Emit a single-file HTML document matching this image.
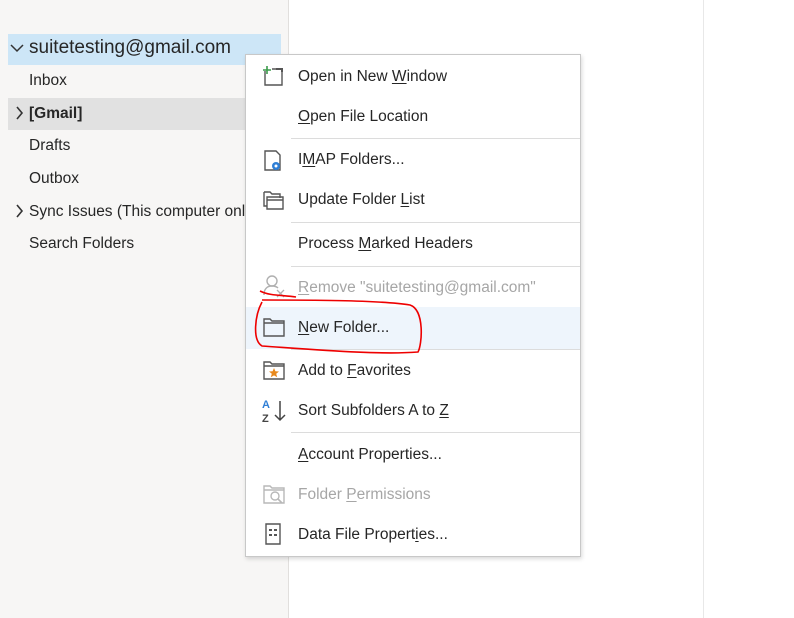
<!DOCTYPE html>
<html><head><style>
body{margin:0;width:794px;height:618px;position:relative;background:#fff;font-family:"Liberation Sans",sans-serif;overflow:hidden;color:#262626}
.left{position:absolute;left:0;top:0;width:288px;height:618px;background:#f7f6f5;border-right:1px solid #e1dfdd}
.vline{position:absolute;left:703px;top:0;width:1px;height:618px;background:#e8e8e8}
.t{position:absolute;font-size:15.5px;white-space:nowrap}
.menu{position:absolute;left:245px;top:54px;width:334px;height:501px;background:#fff;border:1px solid #c8c8c8;box-shadow:1px 2px 4px rgba(0,0,0,.15)}
.it{position:absolute;left:52px;font-size:15.5px;white-space:nowrap;color:#262626}
.dis{color:#a6a6a6}
.sep{position:absolute;left:45px;right:0;height:1px;background:#dcdcdc}
u{text-decoration:underline;text-underline-offset:2px}
svg{position:absolute}
</style></head><body>
<div class="left">
<div style="position:absolute;left:8px;top:34px;width:273px;height:31px;background:#cde6f7"></div>
<div style="position:absolute;left:8px;top:98px;width:240px;height:32px;background:#e1e1e1"></div>
<svg style="left:10px;top:43px" width="14" height="10"><path d="M1 2 L7 8 L13 2" stroke="#333" stroke-width="1.5" fill="none"/></svg>
<div class="t" style="left:29px;top:37px;font-size:19px;color:#262626">suitetesting@gmail.com</div>
<div class="t" style="left:29px;top:72px">Inbox</div>
<svg style="left:16px;top:106px" width="8" height="14"><path d="M1 1 L6 7 L1 13" stroke="#333" stroke-width="1.6" fill="none"/></svg>
<div class="t" style="left:29px;top:105px;font-weight:bold">[Gmail]</div>
<div class="t" style="left:29px;top:137px">Drafts</div>
<div class="t" style="left:29px;top:170px">Outbox</div>
<svg style="left:16px;top:204px" width="8" height="14"><path d="M1 1 L6 7 L1 13" stroke="#333" stroke-width="1.6" fill="none"/></svg>
<div class="t" style="left:29px;top:203px">Sync Issues (This computer only)</div>
<div class="t" style="left:29px;top:235px">Search Folders</div>
</div>
<div class="vline"></div>
<div class="menu">
<div style="position:absolute;left:0;top:252px;width:334px;height:42px;background:#eef5fc"></div>
<svg style="left:16px;top:10px" width="22" height="22"><path d="M3 6 V20 H20 V4 H10" stroke="#555" stroke-width="1.4" fill="none"/><path d="M14 4 H20 V7" stroke="#555" stroke-width="2" fill="none"/><path d="M5 1 V9 M1 5 H9" stroke="#3a9b4a" stroke-width="1.6"/></svg>
<div class="it" style="top:13px">Open in New <u>W</u>indow</div>
<div class="it" style="top:53px"><u>O</u>pen File Location</div>
<div class="sep" style="top:83px"></div>
<svg style="left:16px;top:94px" width="22" height="24"><path d="M3 2 H14 L18 6 V21 H3 Z" stroke="#555" stroke-width="1.4" fill="none"/><circle cx="14" cy="17" r="4" fill="#2f7fd6"/><circle cx="14" cy="17" r="1.5" fill="#fff"/></svg>
<div class="it" style="top:96px">I<u>M</u>AP Folders...</div>
<svg style="left:16px;top:134px" width="24" height="22"><path d="M2 3 H8 L10 5 H18 V9" stroke="#555" stroke-width="1.4" fill="none"/><path d="M5 8 H21 V20 H5 Z M5 11 H21" stroke="#555" stroke-width="1.4" fill="none"/><path d="M2 3 V17 H5" stroke="#555" stroke-width="1.4" fill="none"/></svg>
<div class="it" style="top:136px">Update Folder <u>L</u>ist</div>
<div class="sep" style="top:167px"></div>
<div class="it" style="top:180px">Process <u>M</u>arked Headers</div>
<div class="sep" style="top:211px"></div>
<svg style="left:16px;top:219px" width="24" height="24"><circle cx="10" cy="7" r="5" stroke="#b0b0b0" stroke-width="1.4" fill="none"/><path d="M2 21 C2 14 6 12 10 12 C13 12 15 13 16 14" stroke="#b0b0b0" stroke-width="1.4" fill="none"/><path d="M15 16 L22 23 M22 16 L15 23" stroke="#b0b0b0" stroke-width="1.3"/></svg>
<div class="it dis" style="top:224px"><u>R</u>emove "suitetesting@gmail.com"</div>
<div class="sep" style="top:294px"></div>
<svg style="left:16px;top:261px" width="24" height="22"><path d="M2 3 H8 L10 5 H22 V20 H2 Z M2 7 H22" stroke="#555" stroke-width="1.4" fill="none"/></svg>
<div class="it" style="top:264px"><u>N</u>ew Folder...</div>
<svg style="left:16px;top:304px" width="24" height="22"><path d="M2 3 H8 L10 5 H22 V20 H2 Z M2 7 H22" stroke="#555" stroke-width="1.4" fill="none"/><path d="M12 9 L13.4 12.3 L17 12.5 L14.2 14.8 L15.2 18.3 L12 16.4 L8.8 18.3 L9.8 14.8 L7 12.5 L10.6 12.3 Z" fill="#e8891d"/></svg>
<div class="it" style="top:307px">Add to <u>F</u>avorites</div>
<svg style="left:16px;top:342px" width="26" height="28"><text x="0" y="11" font-size="11" font-family="Liberation Sans" font-weight="bold" fill="#2f7fd6">A</text><text x="0" y="25" font-size="11" font-family="Liberation Sans" font-weight="bold" fill="#444">Z</text><path d="M18 4 V23 M13 18 L18 23 L23 18" stroke="#444" stroke-width="1.5" fill="none"/></svg>
<div class="it" style="top:347px">Sort Subfolders A to <u>Z</u></div>
<div class="sep" style="top:377px"></div>
<div class="it" style="top:391px"><u>A</u>ccount Properties...</div>
<svg style="left:16px;top:428px" width="24" height="22"><path d="M2 3 H8 L10 5 H22 V20 H2 Z M2 7 H22" stroke="#b8b8b8" stroke-width="1.4" fill="none"/><circle cx="13" cy="13" r="4" stroke="#b8b8b8" stroke-width="1.4" fill="none"/><path d="M16 16 L20 20" stroke="#b8b8b8" stroke-width="1.6"/></svg>
<div class="it dis" style="top:431px">Folder <u>P</u>ermissions</div>
<svg style="left:18px;top:467px" width="20" height="24"><path d="M2 2 H16 V22 H2 Z" stroke="#555" stroke-width="1.4" fill="none"/><path d="M5 8 H8 M10 8 H13 M5 13 H8 M10 13 H13" stroke="#555" stroke-width="2"/></svg>
<div class="it" style="top:471px">Data File Propert<u>i</u>es...</div>
</div>
<svg style="position:absolute;left:0;top:0" width="794" height="618"><path d="M260 291 C270 296 282 295 296 297 M262 300 C300 300 380 300 410 305 C425 310 422 345 418 352 C380 355 320 350 262 346 C252 340 255 315 262 302" stroke="#e00" stroke-width="1.6" fill="none"/></svg>
</body></html>
